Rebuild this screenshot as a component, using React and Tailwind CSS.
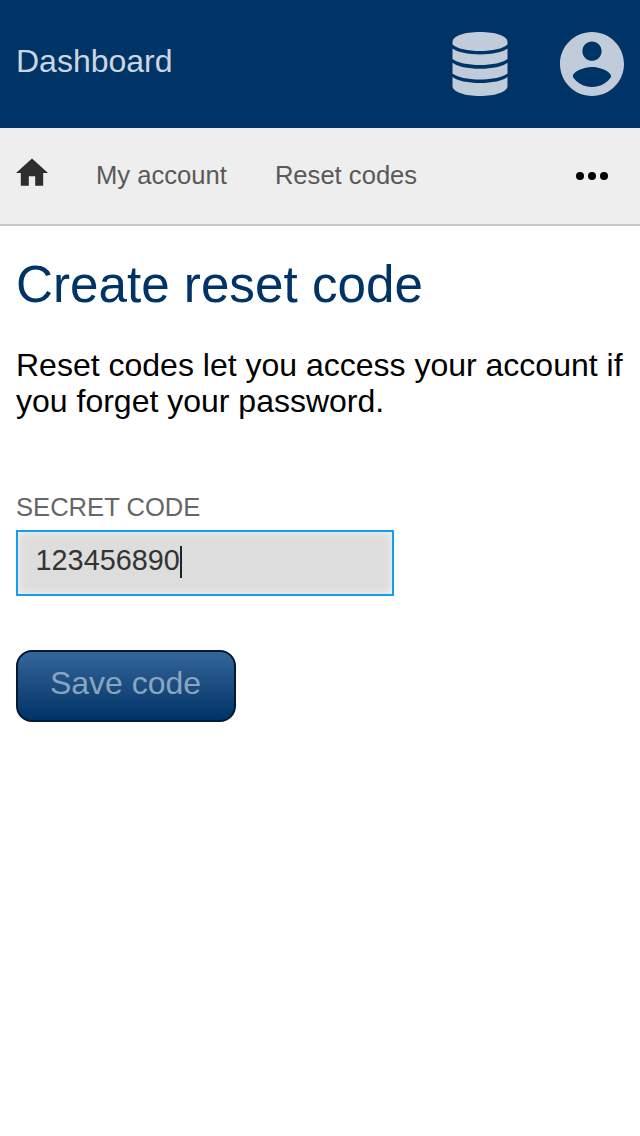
function DatabaseIcon() {
  return (
    <svg viewBox="0 0 64 64" className="block size-16" fill="#c0ccd9">
      <path d="M4.500 10C4.500 4 16 0 32 0s27.500 4 27.500 10v2.500C55 16.700 44 19 32 19S9 16.700 4.500 12.500z" />
      <path d="M4.500 16.600C9 20.300 20 22.500 32 22.500s23-2.200 27.500-5.900v10.500C55 30.800 44 33.100 32 33.100S9 30.800 4.500 27.100z" />
      <path d="M4.500 30.800C9 34.500 20 36.800 32 36.800s23-2.300 27.500-6v10.600C55 45.100 44 47.400 32 47.400S9 45.100 4.500 41.400z" />
      <path d="M4.500 45.100C9 48.800 20 51.100 32 51.100s23-2.300 27.500-6V54C59.500 60 47 64 32 64S4.500 60 4.500 54z" />
    </svg>
  );
}

function AccountIcon() {
  return (
    <svg viewBox="2 2 20 20" className="block size-16" fill="#c0ccd9">
      <path d="M12 2C6.480 2 2 6.480 2 12s4.480 10 10 10 10-4.480 10-10S17.520 2 12 2zm0 3c1.660 0 3 1.340 3 3s-1.340 3-3 3-3-1.340-3-3 1.340-3 3-3zm0 14.200c-2.500 0-4.710-1.280-6-3.220.03-1.990 4-3.080 6-3.080 1.990 0 5.970 1.090 6 3.080-1.290 1.940-3.500 3.220-6 3.220z" />
    </svg>
  );
}

function HomeIcon() {
  return (
    <svg viewBox="2 2 20 20" className="block size-8" fill="#2e2e2e">
      <path d="M10 20v-6h4v6h5v-8h3L12 3 2 12h3v8z" />
    </svg>
  );
}

function MoreIcon() {
  return (
    <svg viewBox="0 0 32 8" className="block h-2 w-8" fill="#000">
      <circle cx="4" cy="4" r="4" />
      <circle cx="16" cy="4" r="4" />
      <circle cx="28" cy="4" r="4" />
    </svg>
  );
}

export default function App() {
  return (
    <div className="min-h-screen bg-white font-['Liberation_Sans',Arial,sans-serif] text-black">
      <header className="flex h-32 items-center justify-between bg-[#003366] px-4">
        <span className="pb-1.5 text-[32px] leading-9 text-[#ccd6e0]">Dashboard</span>
        <div className="flex gap-12">
          <DatabaseIcon />
          <AccountIcon />
        </div>
      </header>
      <nav className="flex h-[98px] items-center border-b-2 border-[#c8c8c8] bg-[#eeeeee] px-4 text-[25.6px] leading-[30px] text-[#595959]">
        <div className="pb-1.5"><HomeIcon /></div>
        <span className="ml-12 pb-0.5">My account</span>
        <span className="ml-12 pb-0.5">Reset codes</span>
        <div className="mr-4 ml-auto"><MoreIcon /></div>
      </nav>
      <main className="flex flex-col items-start px-4 pt-[30px]">
        <h1 className="text-[51.2px] leading-[58px] text-[#003366]">Create reset code</h1>
        <p className="mt-[33px] w-[615px] text-[32px] leading-9">
          Reset codes let you access your account if you forget your password.
        </p>
        <label htmlFor="code" className="mt-[73px] text-[25.6px] leading-[30px] text-[#666666]">SECRET CODE</label>
        <div
          id="code"
          className="mt-2 flex h-[66px] w-[378px] items-center border-2 border-[#139fea] bg-[#dddddd] pb-1 pl-[17.6px] text-[28.8px] leading-8 text-[#333333] shadow-[inset_0_0_8px_#f5f5f5]"
        >
          <span className="pb-0.5">123456890</span>
          <span className="mt-0.5 h-8 w-0.5 bg-[#222222]" />
        </div>
        <button className="mt-[54px] flex h-[72px] w-[220px] items-center justify-center rounded-2xl border-2 border-[#001a33] bg-linear-to-b from-[#336699] to-[#003366] pr-px pb-1.5 text-[32px] leading-9 text-[#8aa5c0]">
          Save code
        </button>
      </main>
    </div>
  );
}
